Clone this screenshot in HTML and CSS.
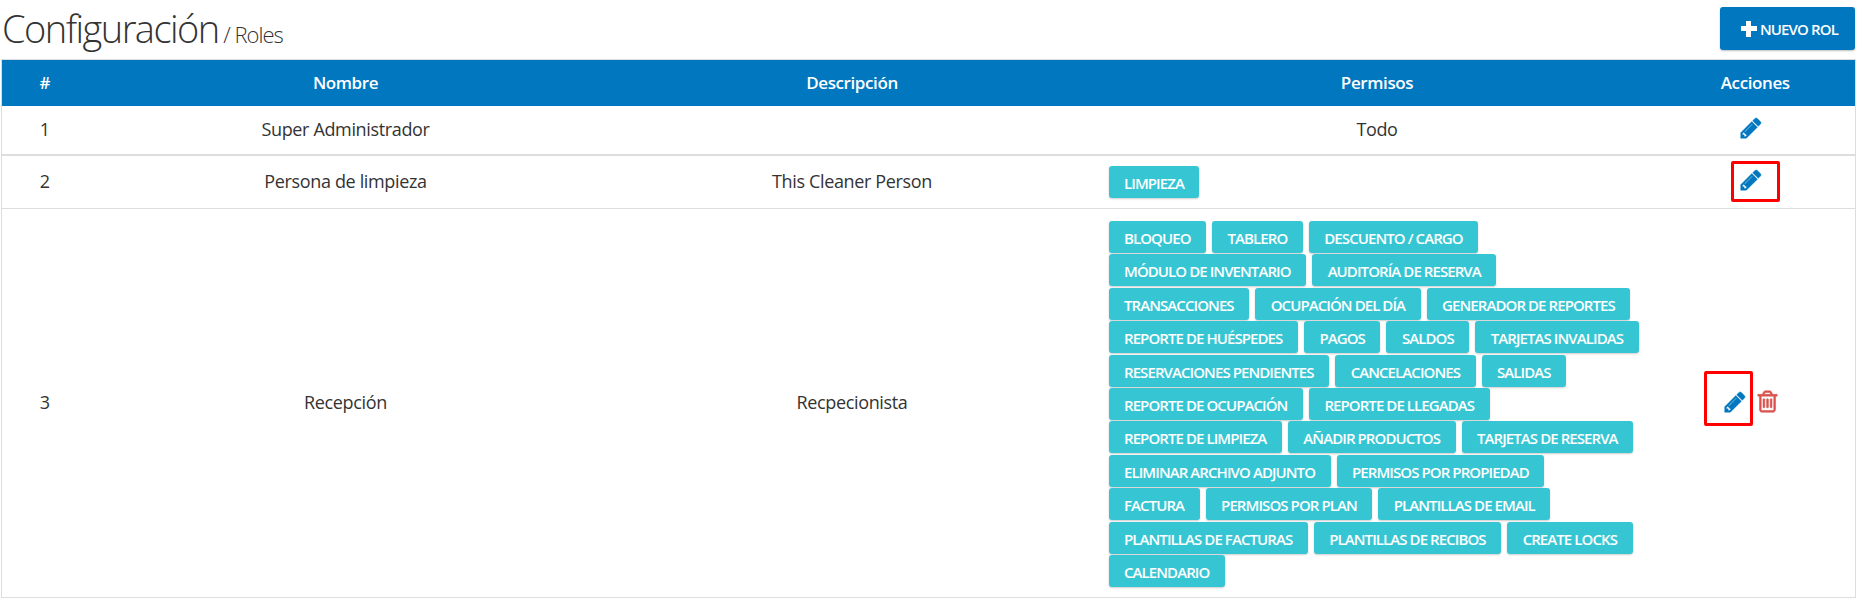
FILE: index.html
```html
<!DOCTYPE html>
<html lang="es">
<head>
<meta charset="utf-8">
<title>Roles</title>
<link rel="stylesheet" href="styles.css">
</head>
<body>
<svg class="defs" width="0" height="0">
  <symbol id="pencil" viewBox="0 0 1792 1792"><path d="M491 1536l91-91-235-235-91 91v107h128v128h107zm523-928q0-22-22-22-10 0-17 7l-542 542q-7 7-7 17 0 22 22 22 10 0 17-7l542-542q7-7 7-17zm-54-192l416 416-832 832h-416v-416zm683 96q0 53-37 90l-166 166-416-416 166-165q36-38 90-38 53 0 91 38l235 234q37 39 37 91z"/></symbol>
  <symbol id="trash" viewBox="0 0 1792 1792"><path d="M704 736v576q0 14-9 23t-23 9h-64q-14 0-23-9t-9-23v-576q0-14 9-23t23-9h64q14 0 23 9t9 23zm256 0v576q0 14-9 23t-23 9h-64q-14 0-23-9t-9-23v-576q0-14 9-23t23-9h64q14 0 23 9t9 23zm256 0v576q0 14-9 23t-23 9h-64q-14 0-23-9t-9-23v-576q0-14 9-23t23-9h64q14 0 23 9t9 23zm128 724v-948h-896v948q0 22 7 40.5t14.5 27 10.5 8.5h832q3 0 10.5-8.5t14.5-27 7-40.5zm-672-1076h448l-48-117q-7-9-17-11h-317q-10 2-17 11zm928 32v64q0 14-9 23t-23 9h-96v948q0 83-47 143.5t-113 60.5h-832q-66 0-113-58.5t-47-141.5v-952h-96q-14 0-23-9t-9-23v-64q0-14 9-23t23-9h309l70-167q15-37 54-63t79-26h320q40 0 79 26t54 63l70 167h309q14 0 23 9t9 23z"/></symbol>
</svg>
<main class="page">
  <header class="top">
    <h1 class="title">Configuración<small class="crumb"> / Roles</small></h1>
    <button class="new-btn"><span class="plus"></span>NUEVO ROL</button>
  </header>
  <table class="roles">
    <colgroup>
      <col class="c1"><col class="c2"><col class="c3"><col class="c4"><col class="c5">
    </colgroup>
    <thead>
      <tr><th>#</th><th>Nombre</th><th>Descripción</th><th>Permisos</th><th class="th-act">Acciones</th></tr>
    </thead>
    <tbody>
      <tr class="r1">
        <td>1</td><td>Super Administrador</td><td></td><td>Todo</td>
        <td class="act"><div class="icons"><svg class="ic edit"><use href="#pencil"/></svg></div></td>
      </tr>
      <tr class="r2">
        <td>2</td><td>Persona de limpieza</td><td>This Cleaner Person</td>
        <td class="perm"><div class="tags"><div class="tag-row"><span class="tag">Limpieza</span></div></div></td>
        <td class="act"><div class="icons"><span class="mark mark-a"></span><svg class="ic edit"><use href="#pencil"/></svg></div></td>
      </tr>
      <tr class="r3">
        <td>3</td><td>Recepción</td><td>Recpecionista</td>
        <td class="perm"><div class="tags">
          <div class="tag-row"><span class="tag">Bloqueo</span><span class="tag">Tablero</span><span class="tag">Descuento / Cargo</span></div>
          <div class="tag-row"><span class="tag">Módulo de inventario</span><span class="tag">Auditoría de reserva</span></div>
          <div class="tag-row"><span class="tag">Transacciones</span><span class="tag">Ocupación del día</span><span class="tag">Generador de reportes</span></div>
          <div class="tag-row"><span class="tag">Reporte de huéspedes</span><span class="tag">Pagos</span><span class="tag">Saldos</span><span class="tag">Tarjetas invalidas</span></div>
          <div class="tag-row"><span class="tag">Reservaciones pendientes</span><span class="tag">Cancelaciones</span><span class="tag">Salidas</span></div>
          <div class="tag-row"><span class="tag">Reporte de ocupación</span><span class="tag">Reporte de llegadas</span></div>
          <div class="tag-row"><span class="tag">Reporte de limpieza</span><span class="tag">Añadir productos</span><span class="tag">Tarjetas de reserva</span></div>
          <div class="tag-row"><span class="tag">Eliminar archivo adjunto</span><span class="tag">Permisos por propiedad</span></div>
          <div class="tag-row"><span class="tag">Factura</span><span class="tag">Permisos por plan</span><span class="tag">Plantillas de email</span></div>
          <div class="tag-row"><span class="tag">Plantillas de facturas</span><span class="tag">Plantillas de recibos</span><span class="tag">Create locks</span></div>
          <div class="tag-row"><span class="tag">Calendario</span></div>
        </div></td>
        <td class="act"><div class="icons"><span class="mark mark-b"></span><svg class="ic edit"><use href="#pencil"/></svg><svg class="ic del"><use href="#trash"/></svg></div></td>
      </tr>
    </tbody>
  </table>
</main>
</body>
</html>
```
FILE: styles.css
```css
* { box-sizing: border-box; }
html, body { margin: 0; padding: 0; background: #fff; }
body { font-family: "Open Sans", "Liberation Sans", sans-serif; color: #333; }
.defs { position: absolute; }
.page { width: 1855px; padding-left: 1px; }

.top { display: flex; justify-content: space-between; align-items: flex-start; height: 59px; padding-top: 7px; }
.title { margin: 0; padding-left: 1px; font-weight: 300; font-size: 38px; line-height: 42px; letter-spacing: -1.55px; color: #333; }
.crumb { font-size: 22px; font-weight: 300; letter-spacing: -1px; }
.new-btn {
  display: flex; align-items: center; justify-content: center;
  width: 135px; height: 43px; padding: 0 0 0 4px; border: 0; border-radius: 3px;
  background: #0077bf; color: #fff;
  font: 600 15px "Open Sans", sans-serif; letter-spacing: -0.85px;
  box-shadow: 0 1px 2px rgba(0,0,0,.25);
}
.plus { position: relative; width: 16px; height: 16px; margin-right: 3px; }
.plus::before, .plus::after { content: ""; position: absolute; background: #fff; }
.plus::before { left: 0; right: 0; top: 5.5px; height: 5px; }
.plus::after { top: 0; bottom: 0; left: 5.5px; width: 5px; }

.roles { width: 1854px; table-layout: fixed; border-collapse: collapse; border: 1px solid #ddd; font-size: 18px; letter-spacing: -0.35px; }
.c1 { width: 86px; } .c2 { width: 516px; } .c3 { width: 497px; } .c4 { width: 553px; } .c5 { width: 202px; }
th { height: 46px; background: #0077bf; color: #fff; font-weight: 600; font-size: 17px; letter-spacing: -0.4px; text-align: center; padding: 0 8px; }
th.th-act { padding-left: 10px; }
td { text-align: center; vertical-align: middle; padding: 0 8px 2px; color: #333; }
.r1 td { height: 49px; border-bottom: 2px solid #ddd; }
.r2 td { height: 54px; border-bottom: 1px solid #ddd; }
.r3 td { height: 389px; }
.r3 td.perm { padding-top: 2px; }
td.perm { text-align: left; padding-bottom: 0; }
.tags { display: flex; flex-direction: column; gap: 1.4px; }
.tag-row { display: flex; gap: 6px; }
.tag {
  display: block; height: 32px; line-height: 35px; padding: 0 15.5px; border-radius: 3px;
  background: #36c6d3; color: #fff; font-size: 15px; font-weight: 600; text-transform: uppercase; letter-spacing: -0.92px; white-space: nowrap;
  box-shadow: 0 1px 2px rgba(0,0,0,.2);
}
.icons { position: relative; display: flex; justify-content: center; align-items: center; gap: 8px; padding: 0 6px 1px 0; }
.ic { width: 24px; height: 24px; display: block; }
.edit { fill: #0077bf; stroke: #0077bf; stroke-width: 30; }
.del { fill: #d9534f; stroke: #d9534f; stroke-width: 40; width: 25px; height: 25px; }
.mark { position: absolute; border: 3px solid #f00; border-radius: 2px; }
.mark-a { left: 69px; top: -7px; width: 49px; height: 41px; }
.mark-b { left: 42px; top: -18px; width: 49px; height: 55px; }
```
